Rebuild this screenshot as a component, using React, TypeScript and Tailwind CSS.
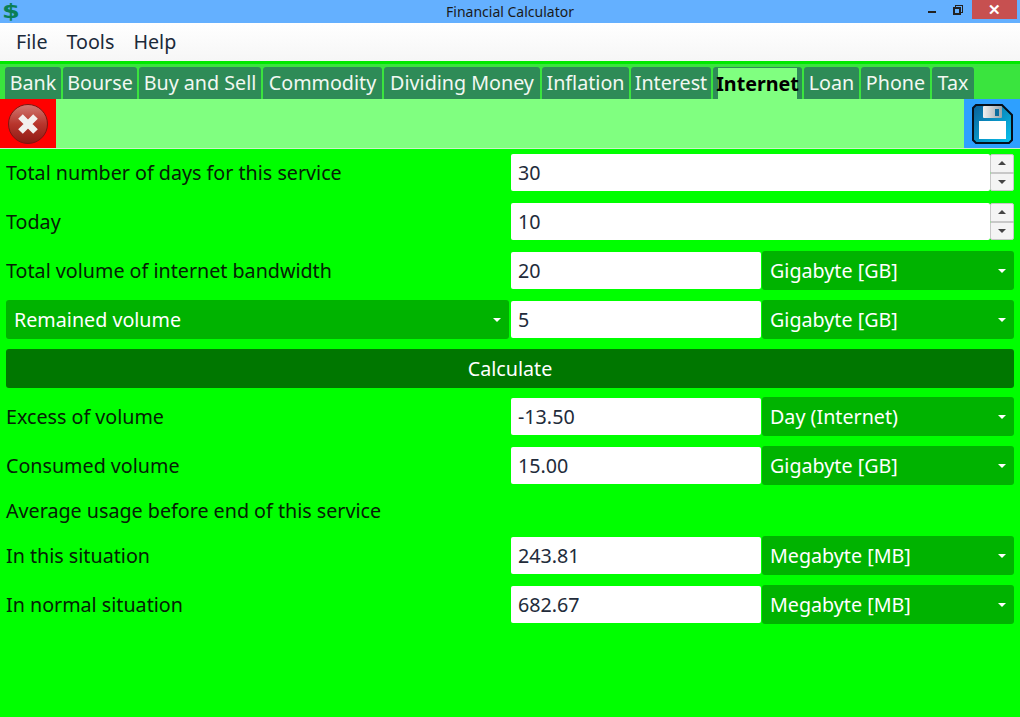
const tabs = [
  { name: 'Bank', w: 'w-[56px]' },
  { name: 'Bourse', w: 'w-[74px]' },
  { name: 'Buy and Sell', w: 'w-[122px]' },
  { name: 'Commodity', w: 'w-[119px]' },
  { name: 'Dividing Money', w: 'w-[156px]' },
  { name: 'Inflation', w: 'w-[87px]' },
  { name: 'Interest', w: 'w-[80px]' },
  { name: 'Internet', w: 'w-[89px]', active: true },
  { name: 'Loan', w: 'w-[55px]' },
  { name: 'Phone', w: 'w-[69px]' },
  { name: 'Tax', w: 'w-[42px]' },
];

function Caret() {
  return <div className="h-0 w-0 border-x-[4px] border-t-[4px] border-x-transparent border-t-white" />;
}

function Select({ text, className }: { text: string; className: string }) {
  return (
    <div className={`flex h-[39px] items-center justify-between rounded-[3px] bg-[#00b300] pl-2 pr-[8px] text-white ${className}`}>
      <span>{text}</span>
      <Caret />
    </div>
  );
}

function Field({ value, className }: { value: string; className: string }) {
  return (
    <div className={`flex h-[37px] items-center rounded-[2px] bg-white pl-[7px] text-[#222b3a] ${className}`}>
      {value}
    </div>
  );
}

function Spinner() {
  return (
    <div className="flex h-[37px] w-[24px] flex-col">
      <div className="flex flex-1 items-center justify-center rounded-t-[2px] border border-[#c8c8c8] bg-[#f4f4f4]">
        <div className="h-0 w-0 border-x-[4px] border-b-[4px] border-x-transparent border-b-[#444]" />
      </div>
      <div className="flex flex-1 items-center justify-center rounded-b-[2px] border border-[#c8c8c8] bg-[#f4f4f4]">
        <div className="h-0 w-0 border-x-[4px] border-t-[4px] border-x-transparent border-t-[#444]" />
      </div>
    </div>
  );
}

function SpinnerRow({ label, value }: { label: string; value: string }) {
  return (
    <div className="flex h-[37px] items-center">
      <div className="w-[505px]">{label}</div>
      <Field value={value} className="w-[479px]" />
      <Spinner />
    </div>
  );
}

function UnitRow({ label, value, unit }: { label: string; value: string; unit: string }) {
  return (
    <div className="flex h-[37px] items-center">
      <div className="w-[505px]">{label}</div>
      <Field value={value} className="w-[250px]" />
      <Select text={unit} className="ml-[1px] w-[252px]" />
    </div>
  );
}

function CloseIcon() {
  return (
    <svg width="40" height="40" viewBox="0 0 40 40">
      <defs>
        <linearGradient id="redBall" x1="0" y1="0" x2="0" y2="1">
          <stop offset="0" stopColor="#d07a74" />
          <stop offset="0.5" stopColor="#b8352c" />
          <stop offset="1" stopColor="#8e1a14" />
        </linearGradient>
      </defs>
      <circle cx="20" cy="20" r="19.5" fill="url(#redBall)" stroke="#7d1510" />
      <path d="M12.5 12.5 L27.5 27.5 M27.5 12.5 L12.5 27.5" stroke="#f2f0ee" strokeWidth="6.5" />
    </svg>
  );
}

function SaveIcon() {
  return (
    <svg width="41" height="40" viewBox="0 0 41 40">
      <defs>
        <linearGradient id="disk" x1="0" y1="0" x2="1" y2="1">
          <stop offset="0" stopColor="#0a5f98" />
          <stop offset="1" stopColor="#08c4f0" />
        </linearGradient>
        <linearGradient id="shutter" x1="0" y1="0" x2="1" y2="0">
          <stop offset="0" stopColor="#f0f0f0" />
          <stop offset="1" stopColor="#9aa4aa" />
        </linearGradient>
      </defs>
      <path d="M4 1 H30 L40 11 V36 L37 39 H4 L1 36 V4 Z" fill="url(#disk)" stroke="#05101c" strokeWidth="2" />
      <rect x="11" y="2" width="19" height="12" rx="1" fill="url(#shutter)" />
      <rect x="23" y="5" width="4" height="7" fill="#0b6c9c" />
      <rect x="7" y="17" width="27" height="18" fill="#ffffff" />
    </svg>
  );
}

export default function App() {
  return (
    <div className="flex h-[717px] w-[1020px] flex-col overflow-hidden bg-[#00ff00] font-['Noto_Sans','Open_Sans',sans-serif] text-[19.7px] text-[#062006]">
      <div className="relative flex h-[23px] shrink-0 items-center justify-center bg-[#64b0ff] text-[14px] text-[#1a1a1a]">
        <span className="absolute left-[2px] top-0 origin-left scale-x-[1.35] font-['DejaVu_Sans',sans-serif] text-[19px] font-bold leading-[23px] text-[#0a7f55]">$</span>
        Financial Calculator
        <div className="absolute right-[3px] top-0 flex h-[19px] items-center">
          <div className="mr-[17px] mt-[5px] h-[2px] w-[8px] bg-[#222]" />
          <div className="relative mr-[9px] h-[10px] w-[10px]">
            <div className="absolute right-0 top-0 h-[8px] w-[8px] border border-[#222]" />
            <div className="absolute bottom-0 left-0 h-[8px] w-[8px] border-2 border-[#222] bg-[#64b0ff]" />
          </div>
          <div className="flex h-[19px] w-[45px] items-center justify-center bg-[#c75050] text-[15px] font-bold text-white">✕</div>
        </div>
      </div>

      <div className="flex h-[38px] shrink-0 items-center gap-[19px] bg-gradient-to-b from-white to-[#f6f6f6] pl-[16px] text-[#1b2a3a]">
        <span>File</span>
        <span>Tools</span>
        <span>Help</span>
      </div>

      <div className="flex h-[38px] shrink-0 items-end gap-[2px] border-t-[3px] border-[#00e800] bg-[#3ae43e] pl-[5px]">
        {tabs.map((t) => (
          <div
            key={t.name}
            className={`flex h-[32px] items-center justify-center rounded-t-[3px] bg-[#2e8b57] ${t.w} ${
              t.active ? 'px-[5px] font-bold text-black' : 'text-[#f2f8f2]'
            }`}
          >
            {t.active ? (
              <div className="mt-[1px] flex h-[31px] w-full items-center justify-center bg-[#80ff80]">{t.name}</div>
            ) : (
              t.name
            )}
          </div>
        ))}
      </div>

      <div className="flex h-[50px] shrink-0 items-center justify-between border-b border-[#c8f0c8] bg-[#80ff80]">
        <div className="flex h-[49px] w-[56px] items-center justify-center bg-[#ff0000]">
          <CloseIcon />
        </div>
        <div className="flex h-[49px] w-[56px] items-center justify-center bg-[#2ea0ff]">
          <SaveIcon />
        </div>
      </div>

      <div className="flex flex-col pl-[6px] pt-[5px]">
        <div className="flex flex-col gap-[12px]">
          <SpinnerRow label="Total number of days for this service" value="30" />
          <SpinnerRow label="Today" value="10" />
          <UnitRow label="Total volume of internet bandwidth" value="20" unit="Gigabyte [GB]" />
          <div className="flex h-[37px] items-center">
            <Select text="Remained volume" className="mr-[2px] w-[503px]" />
            <Field value="5" className="w-[250px]" />
            <Select text="Gigabyte [GB]" className="ml-[1px] w-[252px]" />
          </div>
        </div>
        <div className="mb-[10px] mt-[11px] flex h-[39px] w-[1008px] items-center justify-center rounded-[3px] bg-[#007700] text-white">
          Calculate
        </div>
        <div className="flex flex-col gap-[12px]">
          <UnitRow label="Excess of volume" value="-13.50" unit="Day (Internet)" />
          <UnitRow label="Consumed volume" value="15.00" unit="Gigabyte [GB]" />
        </div>
        <div className="flex h-[53px] items-center">Average usage before end of this service</div>
        <div className="flex flex-col gap-[12px]">
          <UnitRow label="In this situation" value="243.81" unit="Megabyte [MB]" />
          <UnitRow label="In normal situation" value="682.67" unit="Megabyte [MB]" />
        </div>
      </div>
    </div>
  );
}
